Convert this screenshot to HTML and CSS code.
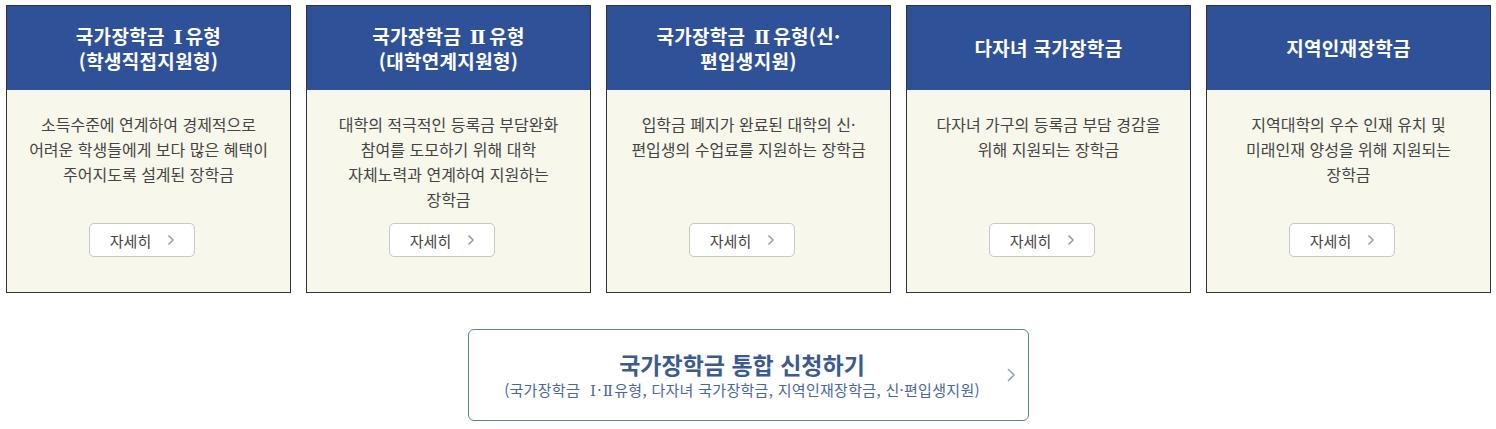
FILE: index.html
```html
<!DOCTYPE html>
<html lang="ko">
<head>
    <meta charset="UTF-8">
    <meta name="viewport" content="width=device-width, initial-scale=1.0">
    <title>국가장학금</title>
    <link rel="stylesheet" href="styles.css">
</head>
<body>
    <div class="cards">
        <div class="card">
            <div class="card-head"><h3>국가장학금 <span class="roman">Ⅰ</span>유형<br>(학생직접지원형)</h3></div>
            <div class="card-body">
                <p class="desc">소득수준에 연계하여 경제적으로<br>어려운 학생들에게 보다 많은 혜택이<br>주어지도록 설계된 장학금</p>
                <a href="#" class="more">자세히 <svg width="8" height="12" viewBox="0 0 8 12"><path d="M1.5 1.5 L6 6 L1.5 10.5" /></svg></a>
            </div>
        </div>
        <div class="card">
            <div class="card-head"><h3>국가장학금 <span class="roman">Ⅱ</span>유형<br>(대학연계지원형)</h3></div>
            <div class="card-body">
                <p class="desc">대학의 적극적인 등록금 부담완화<br>참여를 도모하기 위해 대학<br>자체노력과 연계하여 지원하는<br>장학금</p>
                <a href="#" class="more">자세히 <svg width="8" height="12" viewBox="0 0 8 12"><path d="M1.5 1.5 L6 6 L1.5 10.5" /></svg></a>
            </div>
        </div>
        <div class="card">
            <div class="card-head"><h3>국가장학금 <span class="roman">Ⅱ</span>유형(신·<br>편입생지원)</h3></div>
            <div class="card-body">
                <p class="desc">입학금 폐지가 완료된 대학의 신·<br>편입생의 수업료를 지원하는 장학금</p>
                <a href="#" class="more">자세히 <svg width="8" height="12" viewBox="0 0 8 12"><path d="M1.5 1.5 L6 6 L1.5 10.5" /></svg></a>
            </div>
        </div>
        <div class="card">
            <div class="card-head"><h3>다자녀 국가장학금</h3></div>
            <div class="card-body">
                <p class="desc">다자녀 가구의 등록금 부담 경감을<br>위해 지원되는 장학금</p>
                <a href="#" class="more">자세히 <svg width="8" height="12" viewBox="0 0 8 12"><path d="M1.5 1.5 L6 6 L1.5 10.5" /></svg></a>
            </div>
        </div>
        <div class="card">
            <div class="card-head"><h3>지역인재장학금</h3></div>
            <div class="card-body">
                <p class="desc">지역대학의 우수 인재 유치 및<br>미래인재 양성을 위해 지원되는<br>장학금</p>
                <a href="#" class="more">자세히 <svg width="8" height="12" viewBox="0 0 8 12"><path d="M1.5 1.5 L6 6 L1.5 10.5" /></svg></a>
            </div>
        </div>
    </div>

    <a href="#" class="apply">
        <span class="apply-text">
            <strong>국가장학금 통합 신청하기</strong>
            <span class="apply-sub">(국가장학금 &nbsp;<span class="roman">Ⅰ</span>·<span class="roman">Ⅱ</span>유형, 다자녀 국가장학금, 지역인재장학금, 신·편입생지원)</span>
        </span>
        <svg class="apply-arrow" width="10" height="16" viewBox="0 0 10 16"><path d="M2 2 L8 8 L2 14" /></svg>
    </a>
</body>
</html>
```

FILE: styles.css
```css
body {
    margin: 0;
    font-family: "Noto Sans CJK KR", "Noto Sans", sans-serif;
    background-color: #fff;
    color: #444;
}
a {
    text-decoration: none;
}
.roman {
    font-family: "DejaVu Serif", "Liberation Serif", serif;
    padding: 0 3px;
}
.cards {
    display: flex;
    gap: 15px;
    padding: 5px 0 0 6px;
}
.card {
    width: 283px;
    height: 286px;
    border: 1px solid #333;
    background-color: #f7f7eb;
    display: flex;
    flex-direction: column;
}
.card-head {
    height: 84px;
    background-color: #2f5198;
    display: flex;
    align-items: center;
    justify-content: center;
}
.card-head h3 {
    margin: 0;
    color: #fff;
    font-size: 19px;
    font-weight: bold;
    line-height: 24px;
    letter-spacing: 0.3px;
    text-align: center;
}
.card-body {
    display: flex;
    flex-direction: column;
    align-items: center;
}
.desc {
    margin: 0;
    padding-top: 22px;
    height: 100px;
    font-size: 16px;
    line-height: 25px;
    text-align: center;
    color: #444;
}
.more {
    margin: 11px 14px 0 0;
    width: 102px;
    height: 32px;
    border: 1px solid #c8c8c8;
    border-radius: 5px;
    background-color: #fff;
    color: #444;
    font-size: 15px;
    display: flex;
    align-items: center;
    justify-content: center;
    gap: 16px;
    padding-left: 2px;
    box-sizing: content-box;
}
.more svg path {
    fill: none;
    stroke: #9a9a9a;
    stroke-width: 1.5;
}
.apply {
    display: flex;
    align-items: center;
    width: 559px;
    height: 90px;
    margin: 36px auto 0;
    border: 1px solid #5f7fae;
    border-radius: 6px;
    background-color: #fff;
}
.apply-text {
    flex: 1;
    display: flex;
    flex-direction: column;
    align-items: center;
    padding-left: 10px;
}
.apply-text strong {
    font-size: 23px;
    line-height: 30px;
    color: #3b5a8e;
}
.apply-sub {
    font-size: 15px;
    line-height: 22px;
    color: #4a6799;
    letter-spacing: 0.3px;
}
.apply-sub .roman {
    padding: 0 1px;
}
.apply-arrow {
    margin-right: 12px;
}
.apply-arrow path {
    fill: none;
    stroke: #8ea3c6;
    stroke-width: 1.6;
}
```
